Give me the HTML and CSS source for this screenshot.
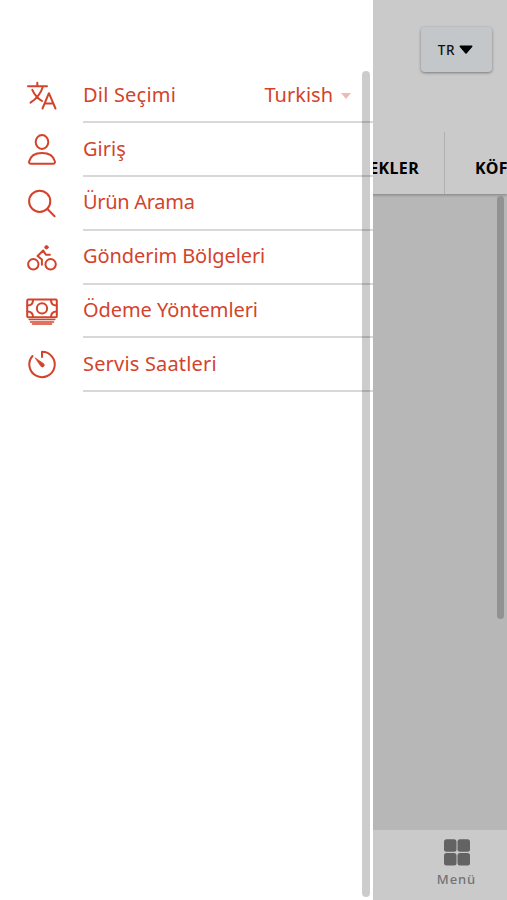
FILE: index.html
```html
<!DOCTYPE html>
<html lang="tr">
<head>
<meta charset="utf-8">
<title>Menü</title>
<link rel="stylesheet" href="styles.css">
</head>
<body>
<div class="app">
  <header class="header">
    <div class="toolbar">
      <button class="lang">TR <svg width="14" height="10" viewBox="0 0 14 10"><path d="M1.300 1.300h11.400L7 8z" fill="#000" stroke="#000" stroke-width="1.600" stroke-linejoin="round"/></svg></button>
    </div>
    <nav class="tabs">
      <div class="tab tab-end">İÇECEKLER</div>
      <div class="tab tab-next">KÖFTELER</div>
    </nav>
  </header>
  <main class="content"><div class="content-scroll"></div></main>
  <footer class="tabbar">
    <div class="tabbar-item">
      <svg width="28" height="28" viewBox="0 0 28 28" fill="#636363"><rect x="1" y="1.200" width="12.500" height="12.500" rx="2.500"/><rect x="14.500" y="1.200" width="12.500" height="12.500" rx="2.500"/><rect x="1" y="14.900" width="12.500" height="12.500" rx="2.500"/><rect x="14.500" y="14.900" width="12.500" height="12.500" rx="2.500"/></svg>
      <span>Menü</span>
    </div>
  </footer>
</div>
<aside class="drawer">
  <ul class="list">
    <li class="item">
      <svg class="icon" viewBox="0 0 32 32"><path d="M2 6.300h19M11.300 2.800v3.500M17 6.500C15 13 10 19 4.500 22.700M6.300 9.800c2 4.500 5.500 8.500 9.700 11.200M16.500 28.500 22.900 13.200l6.600 15.300M18.700 23.500h8.500"/></svg>
      <div class="row"><span class="label language">Dil Seçimi</span><span class="value">Turkish</span><span class="caret"></span></div>
    </li>
    <li class="item">
      <svg class="icon" viewBox="0 0 32 32"><ellipse cx="16" cy="8" rx="6.300" ry="6.900"/><path d="M5 29.700h22c1.500 0 2.200-1 1.900-2.300C27.500 21.500 22 18.900 16 18.900S4.500 21.500 3.100 27.400c-.3 1.300.4 2.300 1.900 2.300z"/></svg>
      <div class="row"><span class="label">Giriş</span></div>
    </li>
    <li class="item">
      <svg class="icon" viewBox="0 0 32 32"><circle cx="13.700" cy="13.300" r="10.600"/><path d="m21.400 21 7.200 7.200"/></svg>
      <div class="row"><span class="label search">Ürün Arama</span></div>
    </li>
    <li class="item">
      <svg class="icon" viewBox="0 0 32 32"><circle cx="7.300" cy="22.300" r="5.200"/><circle cx="24.600" cy="22.300" r="5.200"/><path d="M15.900 22.800v-5.300l-4.300-3.500 5.600-5.500 2.700 4.300h4"/><circle cx="20.500" cy="5.300" r="1.700" fill="currentColor" stroke-width="1"/></svg>
      <div class="row"><span class="label delivery">Gönderim Bölgeleri</span></div>
    </li>
    <li class="item">
      <svg class="icon" viewBox="0 0 32 32"><rect x="1.200" y="3.600" width="29.600" height="17.600" rx="1"/><circle cx="16" cy="12.400" r="5.100"/><path d="M1.500 9.400C5.500 9.400 7 7.400 7 3.900M30.500 9.400C26.500 9.400 25 7.400 25 3.900M1.500 15.400c4 0 5.500 2 5.500 5.500M30.500 15.400c-4 0-5.500 2-5.500 5.500"/><path d="M3.200 23.600h25.600M4.500 25.900h23M6.500 27.900h19" stroke-width="1.500"/></svg>
      <div class="row"><span class="label payment">Ödeme Yöntemleri</span></div>
    </li>
    <li class="item">
      <svg class="icon" viewBox="0 0 32 32"><path d="M16 8V2.700A12.700 12.700 0 1 1 6.500 7"/><path d="m9.300 9 8.400 5.700a1.900 1.900 0 0 1-2.700 2.700z" fill="currentColor" stroke-width=".7"/></svg>
      <div class="row"><span class="label hours">Servis Saatleri</span></div>
    </li>
  </ul>
  <div class="drawer-scroll"></div>
</aside>
</body>
</html>
```

FILE: styles.css
```css
* { box-sizing: border-box; }
body { margin: 0; font-family: "Noto Sans", sans-serif; overflow: hidden; }
.app { height: 900px; display: flex; flex-direction: column; background: #b7b7b7; overflow: hidden; }
.header { height: 194px; background: #cacaca; box-shadow: 0 1px 3px rgba(0,0,0,.3); display: flex; flex-direction: column; justify-content: space-between; }
.toolbar { display: flex; justify-content: flex-end; padding: 27px 15px 0 0; }
.lang { display: flex; align-items: center; justify-content: center; gap: 4px; width: 71px; height: 45px; padding: 0 2px 0 0; border: 0; border-radius: 4px; background: #c4c7c9; font: 500 13.500px "Noto Sans", sans-serif; letter-spacing: .8px; color: #111; box-shadow: 0 1px 3px rgba(0,0,0,.4); }
.tabs { display: flex; height: 62px; margin-left: 300px; }
.tab { flex: none; display: flex; align-items: center; padding-top: 10px; font-size: 16px; font-weight: 700; letter-spacing: .35px; color: #000; }
.tab-end { width: 145px; justify-content: flex-end; padding-right: 25px; border-right: 1px solid #b0b0b0; }
.tab-next { padding-left: 30px; }
.content { flex: 1; display: flex; justify-content: flex-end; padding: 2px 3px 0 0; }
.content-scroll { width: 7px; height: 423px; border-radius: 4px; background: #929292; }
.tabbar { height: 70px; background: #cacaca; display: flex; justify-content: flex-end; }
.tabbar-item { width: 101px; display: flex; flex-direction: column; align-items: center; padding-top: 8px; font-size: 13px; font-weight: 500; letter-spacing: .9px; line-height: 18px; color: #737373; }
.tabbar-item span { margin-top: 4px; }
.drawer { position: absolute; top: 0; left: 0; width: 373px; height: 900px; background: #fff; overflow: hidden; color: #d3432c; }
.list { list-style: none; margin: 0; padding: 69.500px 0 0; }
.item { display: flex; align-items: center; height: 53.800px; padding-left: 26px; }
.icon { flex: none; width: 32px; height: 32px; margin-right: 25px; fill: none; stroke: currentColor; stroke-width: 2; stroke-linecap: round; stroke-linejoin: round; }
.row { flex: 1; height: 100%; display: flex; align-items: center; border-bottom: 2px solid #d8d8d8; font-size: 20px; line-height: 26px; white-space: nowrap; }
.label { flex: 1; margin-top: -1px; }
.language { letter-spacing: .2px; }
.search { letter-spacing: -.3px; }
.delivery, .payment { letter-spacing: -.08px; }
.hours { letter-spacing: .18px; }
.value { margin: -1px 8px 0 0; }
.caret { margin: 2px 22px 0 0; border: 5.500px solid transparent; border-top: 6px solid #f0bab3; border-bottom: 0; }
.drawer-scroll { position: absolute; top: 71px; right: 3px; width: 8px; height: 826px; border-radius: 4px; background: rgba(0,0,0,.2); }
```
